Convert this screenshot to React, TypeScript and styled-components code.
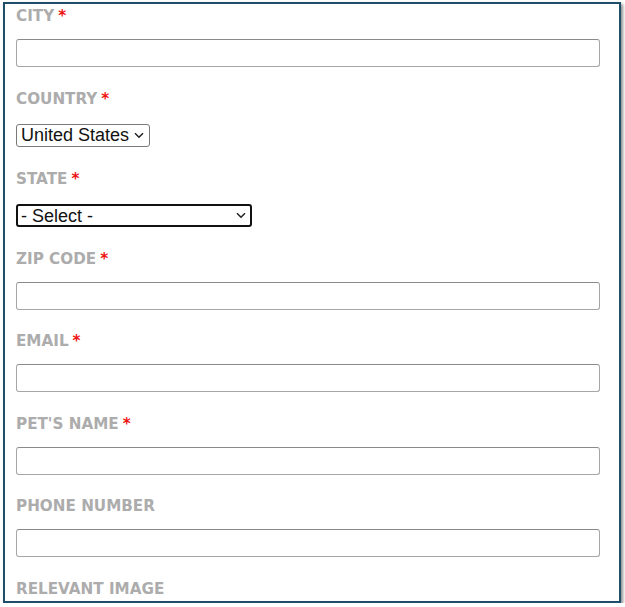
import React from "react";
import styled, { createGlobalStyle } from "styled-components";

const Global = createGlobalStyle`
  html, body { margin: 0; padding: 0; background: #ffffff; }
  body { font-family: "Liberation Sans", Arial, sans-serif; }
  * { box-sizing: border-box; }
`;

const Frame = styled.div`
  margin: 2px 0 0 3px;
  width: 618px;
  height: 601px;
  border: 2px solid #1e4e69;
  box-shadow: 2px 2px 3px rgba(0, 0, 0, 0.45);
  background: #ffffff;
  padding: 2px 19px 0 11px;
  overflow: hidden;
`;

const Field = styled.div<{ $select?: boolean }>`
  display: flex;
  flex-direction: column;
  align-items: flex-start;
  margin-bottom: ${(p) => (p.$select ? "22px" : "21.5px")};
`;

const Label = styled.label<{ $select?: boolean }>`
  font-family: "DejaVu Sans", "Open Sans", sans-serif;
  font-weight: 700;
  font-size: 15.2px;
  line-height: 20px;
  height: 20px;
  color: #acacac;
  text-transform: uppercase;
  margin-bottom: ${(p) => (p.$select ? "15px" : "13px")};
`;

const Req = styled.span`
  color: #ee1111;
  margin-left: 4px;
`;

const TextInput = styled.input`
  width: 100%;
  height: 28px;
  border: 1px solid #a6a6a6;
  border-top-color: #8a8a8a;
  border-radius: 3px;
  background: #ffffff;
  font-family: "Liberation Sans", Arial, sans-serif;
  font-size: 16px;
  padding: 0 6px;
  outline: none;
`;

const SelectWrap = styled.div<{ $width: number }>`
  position: relative;
  width: ${(p) => p.$width}px;
  height: 23px;
`;

const Select = styled.select<{ $focused?: boolean }>`
  appearance: none;
  -webkit-appearance: none;
  width: 100%;
  height: 100%;
  border: ${(p) => (p.$focused ? "2px solid #111111" : "1px solid #7a7a7a")};
  border-radius: 3px;
  background: #ffffff;
  color: #111111;
  font-family: "Liberation Sans", Arial, sans-serif;
  font-size: 18px;
  line-height: 20px;
  padding: 0 0 0 ${(p) => (p.$focused ? "3px" : "4px")};
  outline: none;
`;

const Chevron = styled.svg`
  position: absolute;
  right: 6px;
  top: 8px;
  width: 10px;
  height: 7px;
  pointer-events: none;
`;

type Opt = { label: string; required?: boolean };

const InputField: React.FC<Opt> = ({ label, required }) => (
  <Field>
    <Label>
      {label}
      {required && <Req>*</Req>}
    </Label>
    <TextInput type="text" />
  </Field>
);

const SelectField: React.FC<
  Opt & { value: string; width: number; focused?: boolean }
> = ({ label, required, value, width, focused }) => (
  <Field $select>
    <Label $select>
      {label}
      {required && <Req>*</Req>}
    </Label>
    <SelectWrap $width={width}>
      <Select $focused={focused} defaultValue={value}>
        <option value={value}>{value}</option>
      </Select>
      <Chevron viewBox="0 0 10 7">
        <path
          d="M1 1.2 L5 5.2 L9 1.2"
          fill="none"
          stroke="#222"
          strokeWidth="1.5"
        />
      </Chevron>
    </SelectWrap>
  </Field>
);

export default function App() {
  return (
    <>
      <Global />
      <Frame>
        <InputField label="City" required />
        <SelectField label="Country" required value="United States" width={134} />
        <SelectField label="State" required value="- Select -" width={236} focused />
        <InputField label="Zip Code" required />
        <InputField label="Email" required />
        <InputField label="Pet's Name" required />
        <InputField label="Phone Number" />
        <Field>
          <Label>Relevant Image</Label>
        </Field>
      </Frame>
    </>
  );
}
